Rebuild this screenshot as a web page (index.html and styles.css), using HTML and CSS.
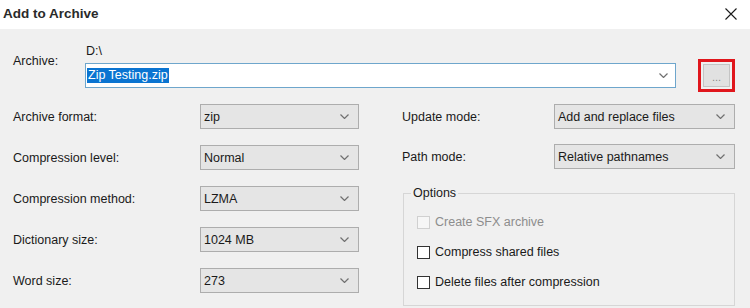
FILE: index.html
```html
<!DOCTYPE html>
<html>
<head>
<meta charset="utf-8">
<title>Add to Archive</title>
<link rel="stylesheet" href="styles.css">
</head>
<body>
<div class="dialog">
  <header class="titlebar">
    <span class="title">Add to Archive</span>
    <svg class="close" width="12" height="12" viewBox="0 0 12 12"><path d="M0.5 0.5L11.5 11.5M11.5 0.5L0.5 11.5"/></svg>
  </header>
  <main class="content">
    <div class="archive-row">
      <span class="archive-label">Archive:</span>
      <div class="archive-path">
        <div class="path">D:\</div>
        <div class="path-input-row">
          <div class="combo-input">
            <span class="sel">Zip Testing.zip</span>
            <svg class="chev" width="9" height="5" viewBox="0 0 9 5"><polyline points="0.5,0.5 4.5,4.5 8.5,0.5"/></svg>
          </div>
          <div class="browse-frame"><div class="browse">...</div></div>
        </div>
      </div>
    </div>
    <div class="settings">
      <div class="col col-left">
        <div class="row"><span class="lbl">Archive format:</span><div class="select"><span>zip</span><svg class="chev" width="9" height="5" viewBox="0 0 9 5"><polyline points="0.5,0.5 4.5,4.5 8.5,0.5"/></svg></div></div>
        <div class="row"><span class="lbl">Compression level:</span><div class="select"><span>Normal</span><svg class="chev" width="9" height="5" viewBox="0 0 9 5"><polyline points="0.5,0.5 4.5,4.5 8.5,0.5"/></svg></div></div>
        <div class="row"><span class="lbl">Compression method:</span><div class="select"><span>LZMA</span><svg class="chev" width="9" height="5" viewBox="0 0 9 5"><polyline points="0.5,0.5 4.5,4.5 8.5,0.5"/></svg></div></div>
        <div class="row"><span class="lbl">Dictionary size:</span><div class="select"><span>1024 MB</span><svg class="chev" width="9" height="5" viewBox="0 0 9 5"><polyline points="0.5,0.5 4.5,4.5 8.5,0.5"/></svg></div></div>
        <div class="row"><span class="lbl">Word size:</span><div class="select"><span>273</span><svg class="chev" width="9" height="5" viewBox="0 0 9 5"><polyline points="0.5,0.5 4.5,4.5 8.5,0.5"/></svg></div></div>
      </div>
      <div class="col col-right">
        <div class="row"><span class="lbl">Update mode:</span><div class="select"><span>Add and replace files</span><svg class="chev" width="9" height="5" viewBox="0 0 9 5"><polyline points="0.5,0.5 4.5,4.5 8.5,0.5"/></svg></div></div>
        <div class="row"><span class="lbl">Path mode:</span><div class="select"><span>Relative pathnames</span><svg class="chev" width="9" height="5" viewBox="0 0 9 5"><polyline points="0.5,0.5 4.5,4.5 8.5,0.5"/></svg></div></div>
        <fieldset class="options">
          <legend>Options</legend>
          <div class="opt-list">
            <label class="opt disabled"><span class="box"></span>Create SFX archive</label>
            <label class="opt"><span class="box"></span>Compress shared files</label>
            <label class="opt"><span class="box"></span>Delete files after compression</label>
          </div>
        </fieldset>
      </div>
    </div>
  </main>
</div>
</body>
</html>
```

FILE: styles.css
```css
html, body {
  margin: 0;
  padding: 0;
}

body {
  width: 750px;
  height: 308px;
  overflow: hidden;
  background: #f0f0f0;
  font-family: "Liberation Sans", Arial, sans-serif;
  font-size: 12.5px;
  color: #1a1a1a;
}

.titlebar {
  height: 29px;
  box-sizing: border-box;
  background: #ffffff;
  display: flex;
  align-items: center;
  justify-content: space-between;
  padding: 0 13px 2px 3px;
}

.title {
  font-size: 13.5px;
  font-weight: bold;
  color: #2a2a2a;
}

.close path {
  stroke: #1a1a1a;
  stroke-width: 1.1;
  fill: none;
}

.content {
  padding: 14px 15px 0 13px;
}

.archive-row {
  display: flex;
}

.archive-label {
  width: 72px;
  flex: none;
  line-height: 16px;
  padding-top: 10px;
}

.archive-path {
  flex: 1;
}

.path {
  line-height: 16px;
  padding-left: 1px;
}

.path-input-row {
  display: flex;
  align-items: center;
  gap: 22px;
}

.combo-input {
  flex: 1;
  height: 25px;
  box-sizing: border-box;
  border: 1px solid #6ea6cc;
  background: #ffffff;
  display: flex;
  align-items: center;
  justify-content: space-between;
  padding: 0 7px 0 1px;
}

.sel {
  background: #0a74d1;
  color: #ffffff;
  line-height: 15px;
  padding: 0 1px;
}

.chev polyline {
  fill: none;
  stroke: #707070;
  stroke-width: 1.2;
}

.browse-frame {
  width: 37px;
  height: 33px;
  box-sizing: border-box;
  border: 3px solid #e0161c;
  padding: 2px;
  flex: none;
}

.browse {
  width: 100%;
  height: 100%;
  box-sizing: border-box;
  background: #e1e1e1;
  border: 1px solid #c4c4c4;
  color: #8a8a8a;
  font-size: 11px;
  line-height: 11px;
  display: flex;
  align-items: center;
  justify-content: center;
  padding-top: 4px;
}

.settings {
  display: flex;
  margin-top: 12px;
  gap: 43px;
}

.col-left {
  width: 346px;
  flex: none;
}

.col-right {
  flex: 1;
}

.row {
  display: flex;
  align-items: center;
  height: 25px;
}

.col-left .row {
  margin-bottom: 16px;
}

.col-right .row {
  margin-bottom: 15px;
}

.col-left .lbl {
  width: 187px;
  flex: none;
}

.col-right .lbl {
  width: 152px;
  flex: none;
}

.select {
  height: 25px;
  box-sizing: border-box;
  flex: 1;
  border: 1px solid #adadad;
  background: #e5e5e5;
  display: flex;
  align-items: center;
  justify-content: space-between;
  padding: 0 9px 0 3px;
  color: #1a1a1a;
}

.options {
  margin: 16px 0 0 1px;
  border: 1px solid #d6d6d6;
  padding: 0 8px 14px 7px;
}

.options legend {
  padding: 0 2px;
  line-height: 16px;
}

.opt-list {
  display: flex;
  flex-direction: column;
  gap: 12px;
  margin-top: 12px;
  padding-left: 6px;
}

.opt {
  display: flex;
  align-items: center;
  height: 18px;
}

.box {
  width: 13px;
  height: 13px;
  box-sizing: border-box;
  border: 1px solid #333333;
  background: #ffffff;
  margin-right: 5px;
}

.opt.disabled {
  color: #8d8d8d;
}

.opt.disabled .box {
  border-color: #d0d0d0;
  background: #f6f6f6;
}
```
